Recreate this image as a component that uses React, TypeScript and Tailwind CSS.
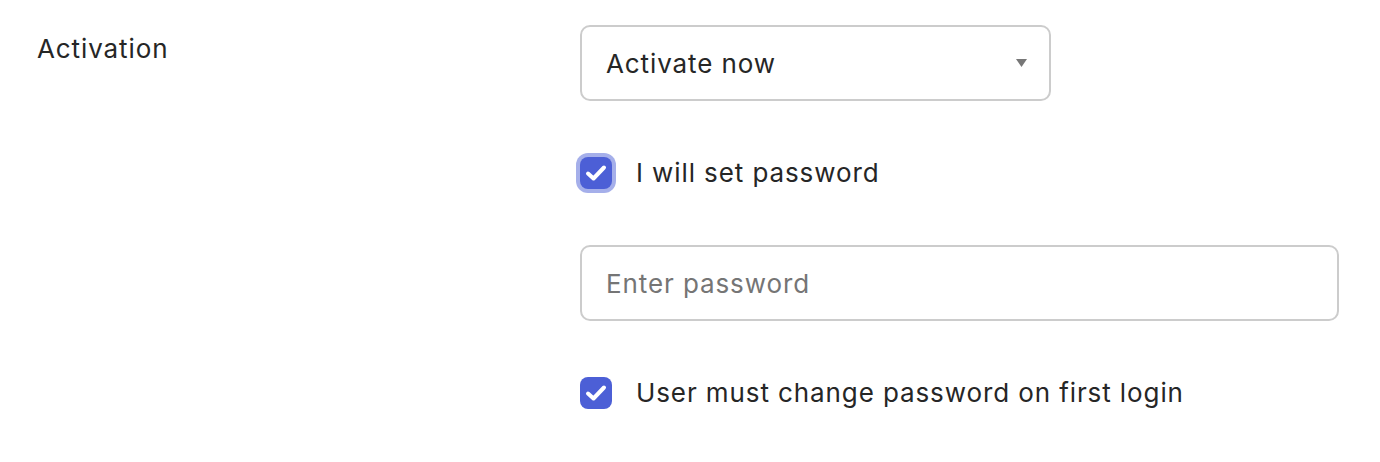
import React from "react";

function Check() {
  return (
    <svg width="32" height="32" viewBox="0 0 32 32" fill="none">
      <path d="M8 16.5 L13.5 21.5 L24 10.5" stroke="white" strokeWidth="4" strokeLinecap="round" strokeLinejoin="round" />
    </svg>
  );
}

export default function App() {
  return (
    <div className="w-[1380px] h-[462px] bg-white text-[#262626] flex tracking-[0.9px]" style={{ fontFamily: "Inter, 'Noto Sans', sans-serif" }}>
      <div className="w-[580px] pl-[37px] pt-[31px] text-[26px] leading-[36px]">Activation</div>
      <div className="flex flex-col pt-[25px] gap-[56px] w-[759px]">
        <div className="w-[471px] h-[76px] border-2 border-[#cccccc] rounded-[10px] flex items-center justify-between pl-[24px] pr-[22px] text-[26px]">
          <span>Activate now</span>
          <svg width="11" height="8" viewBox="0 0 11 8"><path d="M0 0 H11 L5.5 8 Z" fill="#777777" /></svg>
        </div>
        <div className="flex items-center h-[32px] gap-[24px]">
          <div className="w-[32px] h-[32px] shrink-0 rounded-[8px] bg-[#4c5fd6] ring-4 ring-[#4c5fd6]/50 flex items-center justify-center">
            <Check />
          </div>
          <span className="text-[26px] leading-[36px]">I will set password</span>
        </div>
        <div className="w-[759px] h-[76px] border-2 border-[#cccccc] rounded-[10px] flex items-center pl-[24px] text-[26px] text-[#757575]">
          Enter password
        </div>
        <div className="flex items-center h-[32px] gap-[24px]">
          <div className="w-[32px] h-[32px] shrink-0 rounded-[8px] bg-[#4c5fd6] flex items-center justify-center">
            <Check />
          </div>
          <span className="text-[26px] leading-[36px]">User must change password on first login</span>
        </div>
      </div>
    </div>
  );
}
